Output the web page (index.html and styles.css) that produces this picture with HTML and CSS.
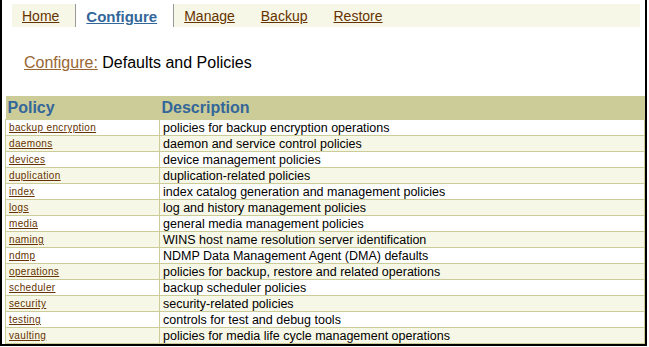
FILE: index.html
```html
<!DOCTYPE html>
<html lang="en">
<head>
  <meta charset="UTF-8" />
  <title>Configure: Defaults and Policies</title>
  <link rel="stylesheet" href="styles.css">
</head>
<body>
  <div class="frame">
    <nav class="tabs">
      <a class="tab" href="#">Home</a>
      <a class="tab active" href="#">Configure</a>
      <a class="tab" href="#">Manage</a>
      <a class="tab" href="#">Backup</a>
      <a class="tab" href="#">Restore</a>
    </nav>

    <h2 class="crumb"><a href="#">Configure:</a> Defaults and Policies</h2>

    <table class="policies">
      <thead>
        <tr><th class="col-policy">Policy</th><th>Description</th></tr>
      </thead>
      <tbody>
        <tr><td><a href="#">backup encryption</a></td><td>policies for backup encryption operations</td></tr>
        <tr><td><a href="#">daemons</a></td><td>daemon and service control policies</td></tr>
        <tr><td><a href="#">devices</a></td><td>device management policies</td></tr>
        <tr><td><a href="#">duplication</a></td><td>duplication-related policies</td></tr>
        <tr><td><a href="#">index</a></td><td>index catalog generation and management policies</td></tr>
        <tr><td><a href="#">logs</a></td><td>log and history management policies</td></tr>
        <tr><td><a href="#">media</a></td><td>general media management policies</td></tr>
        <tr><td><a href="#">naming</a></td><td>WINS host name resolution server identification</td></tr>
        <tr><td><a href="#">ndmp</a></td><td>NDMP Data Management Agent (DMA) defaults</td></tr>
        <tr><td><a href="#">operations</a></td><td>policies for backup, restore and related operations</td></tr>
        <tr><td><a href="#">scheduler</a></td><td>backup scheduler policies</td></tr>
        <tr><td><a href="#">security</a></td><td>security-related policies</td></tr>
        <tr><td><a href="#">testing</a></td><td>controls for test and debug tools</td></tr>
        <tr><td><a href="#">vaulting</a></td><td>policies for media life cycle management operations</td></tr>
      </tbody>
    </table>
  </div>
</body>
</html>
```

FILE: styles.css
```css
body {
  margin: 0;
  padding: 0;
  background: #fff;
  font-family: 'Liberation Sans', Arial, sans-serif;
  color: #000;
}

.frame {
  width: 643px;
  height: 344px;
  border: 2px solid #000;
  border-top: none;
  overflow: hidden;
}

.tabs {
  display: flex;
  margin: 4px 0 0 10px;
  width: 628px;
  height: 23px;
  background-color: #f7f7e7;
}

.tab {
  padding: 4px 16px 0 10px;
  font-size: 14px;
  line-height: 16px;
  color: #663300;
}

.tab.active {
  background-color: #fff;
  border-left: 1px solid #999;
  border-right: 1px solid #999;
  color: #336699;
  font-size: 15px;
  font-weight: bold;
  padding: 5px 16px 0 10px;
}

.crumb {
  margin: 27px 0 0 22px;
  font-size: 16px;
  font-weight: normal;
  line-height: 18px;
}

.crumb a {
  color: #996633;
}

.policies {
  margin: 24px 0 0 3px;
  width: 640px;
  border-collapse: collapse;
}

.policies th {
  height: 23px;
  padding: 0 0 0 2px;
  background-color: #cccc99;
  color: #336699;
  font-size: 16px;
  text-align: left;
  vertical-align: middle;
}

.policies .col-policy {
  width: 152px;
}

.policies td {
  height: 15px;
  padding: 0 3px;
  border: 1px solid #cccc99;
  font-size: 12.5px;
  line-height: 14px;
  white-space: nowrap;
}

.policies tbody tr:nth-child(even) td {
  background-color: #f7f7e7;
}

.policies td a {
  font-size: 10px;
  letter-spacing: 0.35px;
  color: #663300;
}
```
